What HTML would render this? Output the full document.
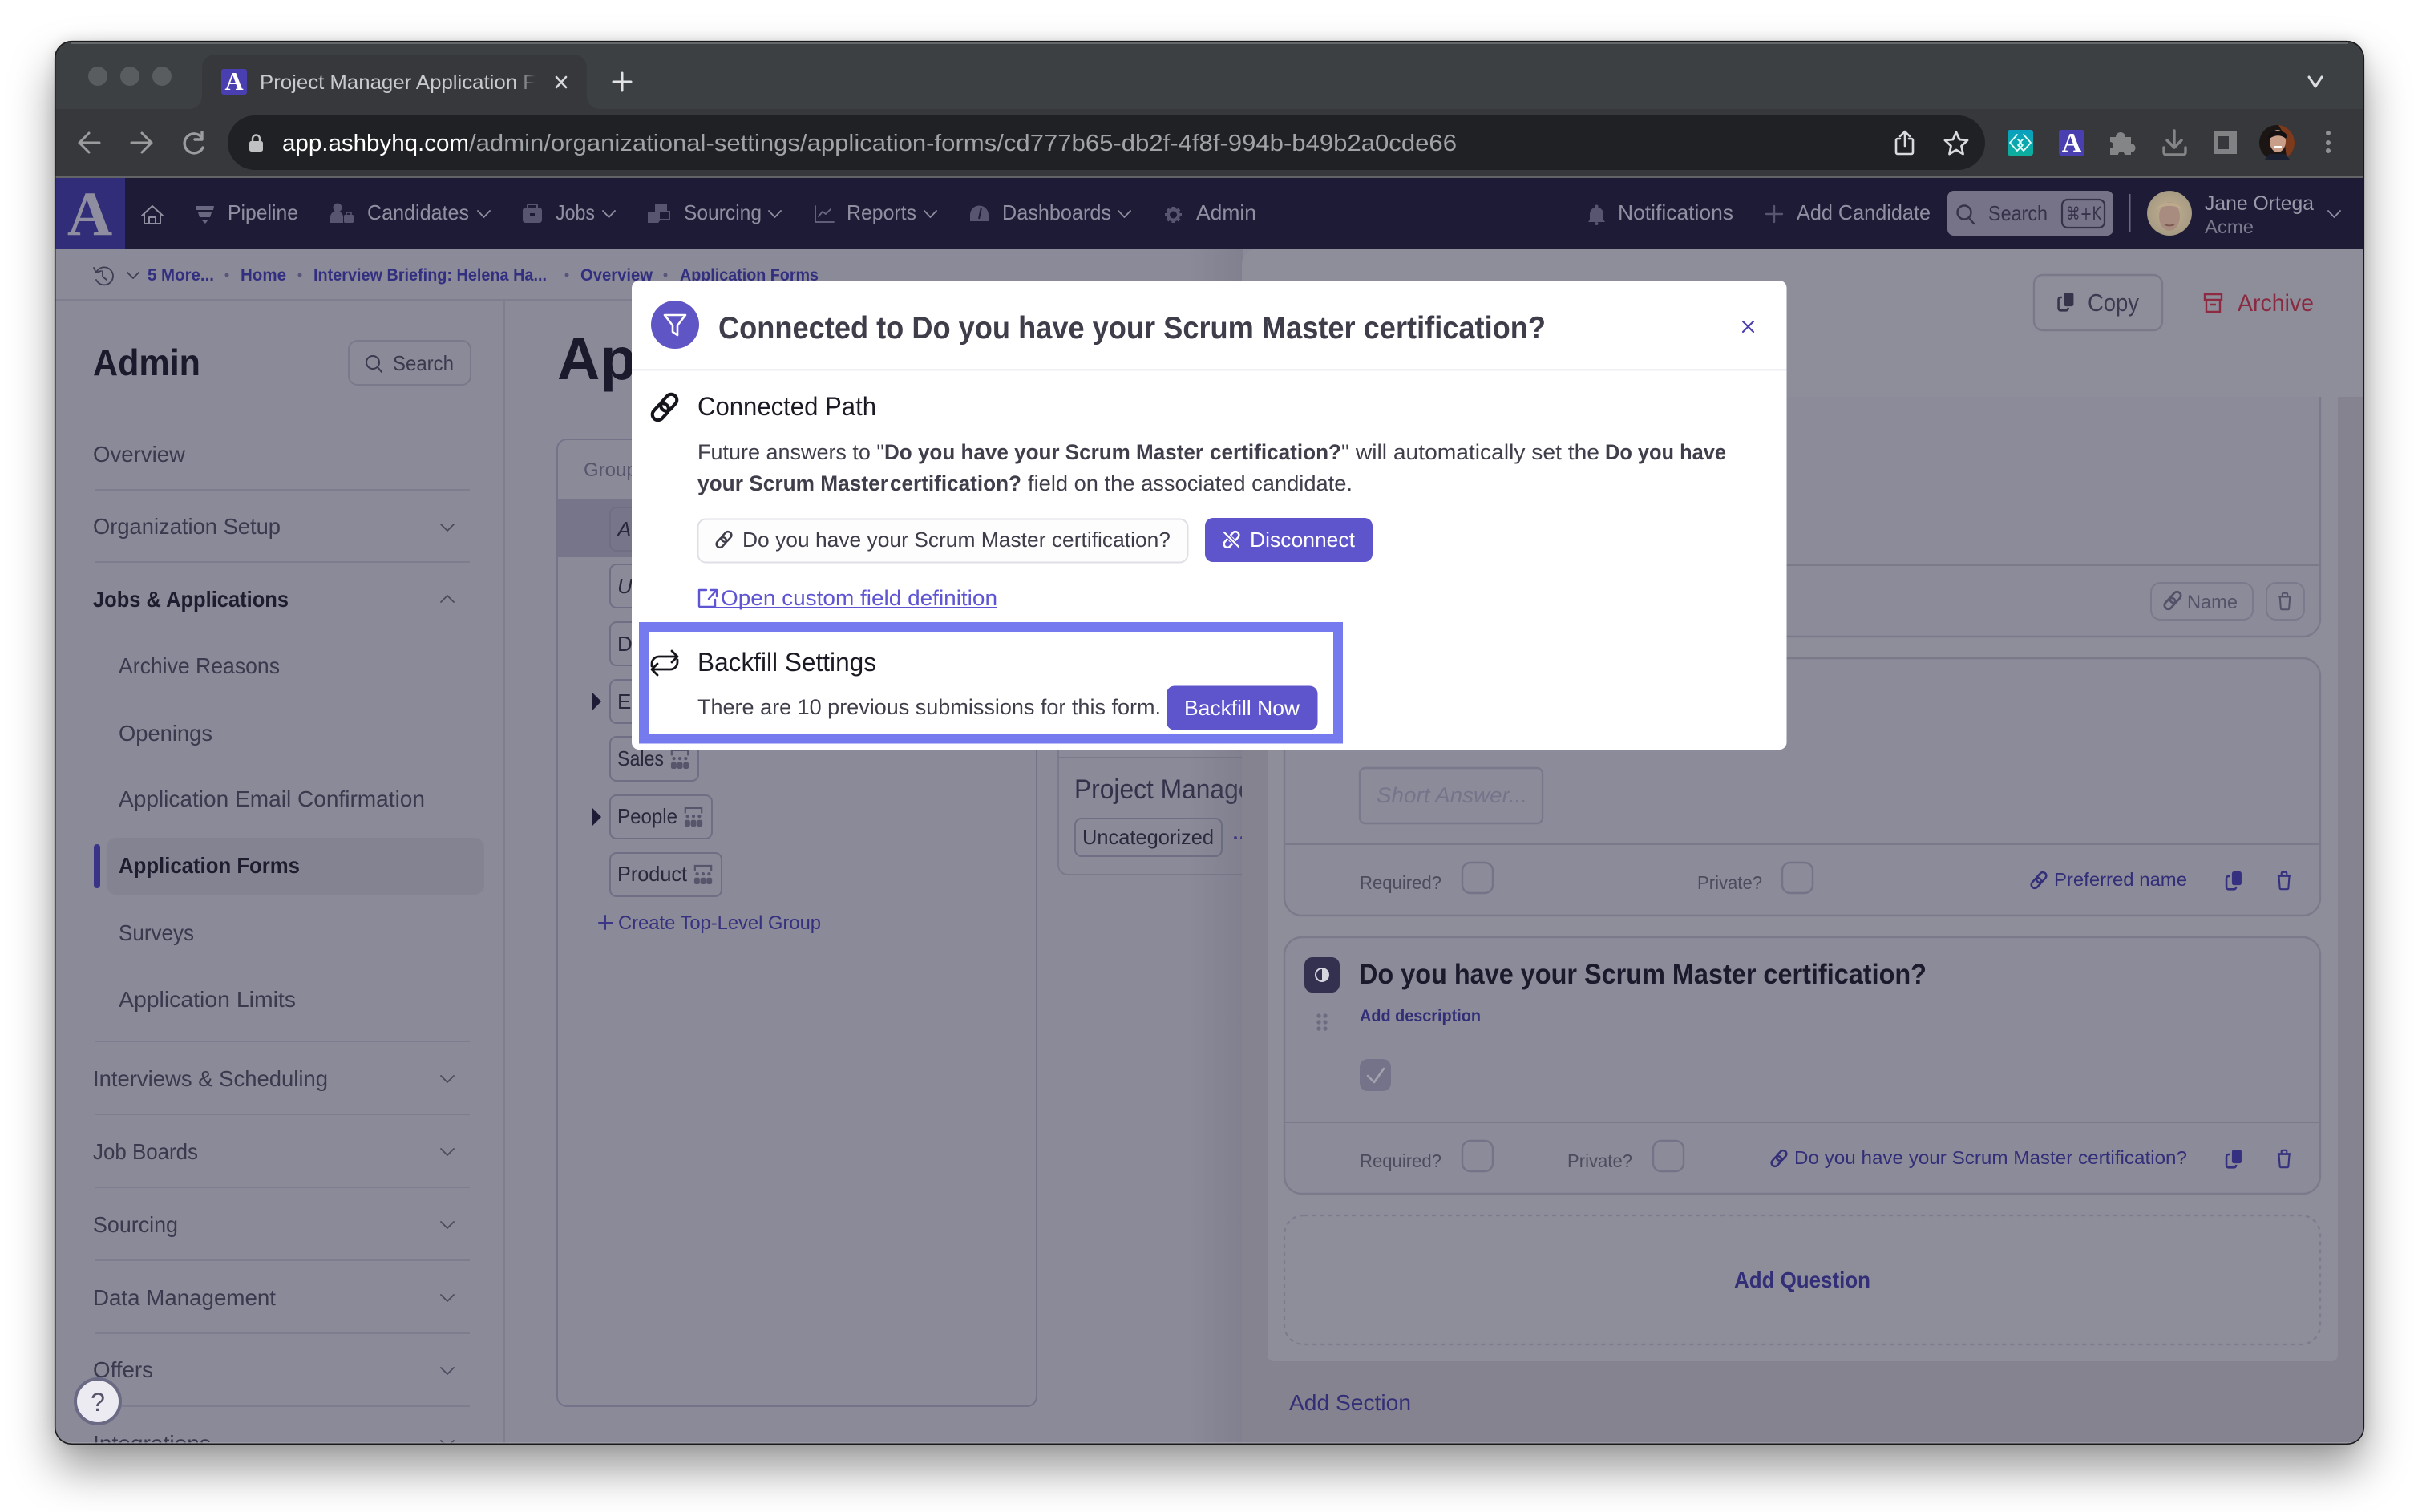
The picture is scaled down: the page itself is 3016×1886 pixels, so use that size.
<!DOCTYPE html>
<html><head><meta charset="utf-8"><style>
html,body{margin:0;padding:0;background:#fff;width:3016px;height:1886px;overflow:hidden}
#sh{position:absolute;left:68px;top:51px;width:2881px;height:1751px;border-radius:22px;box-shadow:0 30px 56px rgba(0,0,0,.4),0 0 16px rgba(0,0,0,.12)}
svg{position:absolute;left:0;top:0}
text{font-family:"Liberation Sans",sans-serif;white-space:pre}
.b{font-weight:700}
.n{fill:#908fa1;font-size:26px}
.s{fill:#3a394e;font-size:28px;transform:translate(-1px,-1px)}
.bc{fill:#332f80;font-size:21px;font-weight:700}
.p{fill:#3f3e4a;font-size:27px;transform:translateX(-1px)}
.l{fill:#332e78;font-size:23px}
.g{fill:#4d4c5e;font-size:23px}
.ic{fill:none;stroke-linecap:round;stroke-linejoin:round}
</style></head><body>
<div id="sh"></div>
<svg width="3016" height="1886" viewBox="0 0 3016 1886" xmlns="http://www.w3.org/2000/svg">
<defs>
<clipPath id="win"><rect x="68" y="51" width="2881" height="1751" rx="22"/></clipPath>
<linearGradient id="tabf" x1="0" x2="1"><stop offset=".93" stop-color="#c9cacc"/><stop offset="1" stop-color="#c9cacc" stop-opacity="0"/></linearGradient>
<linearGradient id="teal" x1="0" x2="0" y1="0" y2="1"><stop offset="0" stop-color="#0a9fc0"/><stop offset="1" stop-color="#0cae9c"/></linearGradient>
<linearGradient id="psh" x1="0" x2="1"><stop offset="0" stop-color="#5e5d70" stop-opacity="0"/><stop offset="1" stop-color="#5e5d70" stop-opacity=".22"/></linearGradient>
<radialGradient id="hair" cx=".5" cy=".5" r=".6"><stop offset="0" stop-color="#c2b090"/><stop offset=".8" stop-color="#a89c84"/><stop offset="1" stop-color="#67675a"/></radialGradient>
<symbol id="chain" viewBox="-14 -14 28 28" overflow="visible"><g transform="rotate(42)" fill="none" stroke="currentColor" stroke-width="3.2"><rect x="-5.500" y="-15" width="11" height="18" rx="5.500"/><rect x="-5.500" y="-3" width="11" height="18" rx="5.500"/></g></symbol>
<symbol id="copy" viewBox="0 0 24 28" overflow="visible"><rect x="9" y="0" width="14" height="20" rx="3" fill="currentColor"/><path d="M6 7H4a3 3 0 0 0-3 3v13a3 3 0 0 0 3 3h8a3 3 0 0 0 3-3v-1" fill="none" stroke="currentColor" stroke-width="3"/></symbol>
<symbol id="trash" viewBox="0 0 22 28" overflow="visible"><path d="M3 7h16l-1.500 19a1.500 1.500 0 0 1-1.500 1H6a1.500 1.500 0 0 1-1.500-1zM1 6.500h20M7 6V2.500A1.500 1.500 0 0 1 8.500 1h5A1.500 1.500 0 0 1 15 2.500V6" fill="none" stroke="currentColor" stroke-width="2.600"/></symbol>
<symbol id="org" viewBox="0 0 26 28" overflow="visible"><path d="M2 9V2h22v7" fill="none" stroke="currentColor" stroke-width="2.400"/><g fill="currentColor"><circle cx="5" cy="13" r="2.300"/><circle cx="13" cy="13" r="2.300"/><circle cx="21" cy="13" r="2.300"/><rect x="1" y="18" width="7.500" height="9" rx="2.500"/><rect x="9.300" y="18" width="7.500" height="9" rx="2.500"/><rect x="17.600" y="18" width="7.500" height="9" rx="2.500"/></g></symbol>
</defs>

<g clip-path="url(#win)">
<!-- chrome -->
<rect x="68" y="51" width="2881" height="85" fill="#3d4043"/>
<rect x="68" y="136" width="2881" height="84" fill="#37383b"/>
<rect x="68" y="220" width="2881" height="2" fill="#636466"/>
<circle cx="122" cy="95" r="12" fill="#595d5f"/><circle cx="162" cy="95" r="12" fill="#595d5f"/><circle cx="202" cy="95" r="12" fill="#595d5f"/>
<path d="M236 136a16 16 0 0 0 16-16V84a16 16 0 0 1 16-16h448a16 16 0 0 1 16 16v36a16 16 0 0 0 16 16z" fill="#37383b"/>
<rect x="276" y="86" width="32" height="32" rx="3" fill="#4a3fb0"/>
<text x="292" y="112" text-anchor="middle" style="font-family:'Liberation Serif',serif;font-weight:700;font-size:32px" fill="#fff">A</text>
<text x="324" y="111" font-size="25" fill="url(#tabf)" textLength="344" lengthAdjust="spacingAndGlyphs">Project Manager Application F</text>
<path d="M694 96l12 13M706 96l-12 13" stroke="#d8d9db" stroke-width="2.600" class="ic"/>
<path d="M776 91v22M765 102h22" stroke="#e2e3e4" stroke-width="3" class="ic"/>
<path d="M2880 96l8 12 8-12" stroke="#dcdddf" stroke-width="3" class="ic"/>
<rect x="284" y="144" width="2192" height="68" rx="34" fill="#202124"/>
<path d="M124 178H100M111 166l-12 12 12 12" stroke="#9a9c9e" stroke-width="3" class="ic"/>
<path d="M164 178h24M177 166l12 12-12 12" stroke="#9a9c9e" stroke-width="3" class="ic"/>
<path d="M252 172a12 12 0 1 0 1 12M252 165v9h-9" stroke="#9a9c9e" stroke-width="3.400" class="ic"/>
<rect x="311" y="176" width="17" height="13" rx="2.500" fill="#bfc1c3"/><path d="M315 177v-4a4.500 4.500 0 0 1 9 0v4" stroke="#bfc1c3" stroke-width="2.400" class="ic"/>
<text x="352" y="188" font-size="29" fill="#fff" textLength="233" lengthAdjust="spacingAndGlyphs">app.ashbyhq.com</text>
<text x="585" y="188" font-size="29" fill="#a1a3a6" textLength="1232" lengthAdjust="spacingAndGlyphs">/admin/organizational-settings/application-forms/cd777b65-db2f-4f8f-994b-b49b2a0cde66</text>
<path d="M2370 173h-3a2 2 0 0 0-2 2v15a2 2 0 0 0 2 2h17a2 2 0 0 0 2-2v-15a2 2 0 0 0-2-2h-3M2376 182v-17M2370 170l6-6 6 6" stroke="#d9dadc" stroke-width="2.600" class="ic"/>
<path d="M2440 165l4 9 10 1-7.500 7 2 10-8.500-5-8.500 5 2-10-7.500-7 10-1z" stroke="#d9dadc" stroke-width="2.800" class="ic"/>
<rect x="2504" y="162" width="32" height="32" rx="3" fill="url(#teal)"/>
<path d="M2516 168l-9 10 9 10 7-7-4-3 4-4M2524 168l9 10-9 10-7-7 4-3-4-4" stroke="#e8fbfb" stroke-width="1.800" class="ic"/>
<rect x="2568" y="162" width="32" height="32" rx="3" fill="#4a3fb0"/>
<text x="2584" y="189" text-anchor="middle" style="font-family:'Liberation Serif',serif;font-weight:700;font-size:34px" fill="#fff">A</text>
<path d="M2632 171h7a6 6 0 1 1 12 0h7v8a5.500 5.500 0 1 1 0 11v3h-8a4 4 0 1 0-8 0h-10v-8a4 4 0 1 0 0-8z" fill="#848587"/>
<path d="M2712 163v20M2703 175l9 9 9-9M2699 184v6a3 3 0 0 0 3 3h21a3 3 0 0 0 3-3v-6" stroke="#848587" stroke-width="3.400" class="ic"/>
<rect x="2762" y="164" width="28" height="28" fill="#818283"/><rect x="2767" y="170" width="13" height="16" fill="#37383b"/>
<ellipse cx="2840" cy="178" rx="22" ry="22" fill="#1b1614"/><path d="M2842 156a22 22 0 0 1 20 22c0 8-4 15-10 18l-4-30z" fill="#7d3a1c"/>
<ellipse cx="2841" cy="176" rx="10" ry="14" fill="#c99e88"/><path d="M2829 172c0-11 21-12 24-2l-2 3c-5-5-14-5-20 0z" fill="#141012"/><rect x="2836" y="182" width="10" height="2.500" fill="#fff"/><path d="M2824 200l7-8h19l7 8z" fill="#1a2032"/>
<circle cx="2904" cy="166" r="3" fill="#909193"/><circle cx="2904" cy="178" r="3" fill="#909193"/><circle cx="2904" cy="188" r="3" fill="#909193"/>

<!-- nav -->
<rect x="68" y="222" width="2881" height="88" fill="#1d1b36"/>
<rect x="68" y="222" width="88" height="88" fill="#322d78"/>
<text x="112" y="293" text-anchor="middle" style="font-family:'Liberation Serif',serif;font-weight:700;font-size:78px" fill="#8f8ea0">A</text>
<path d="M177 269l13-12 13 12M180 266v12a1 1 0 0 0 1 1h18a1 1 0 0 0 1-1v-12M186 279v-8h8v8" stroke="#8f8ea0" stroke-width="2" class="ic"/>
<path d="M244 257h23l-1 5h-21zM247 265h17l-2 6h-13zM251 274h9l-4 5z" fill="#6a6880"/>
<text class="n" x="284" y="274" textLength="88" lengthAdjust="spacingAndGlyphs">Pipeline</text>
<circle cx="421" cy="259" r="5.500" fill="#57556f"/><path d="M412 278v-7a8 8 0 0 1 16 0v7z" fill="#57556f"/><rect x="429" y="268" width="12" height="10" rx="1.500" fill="#57556f"/><rect x="432" y="265" width="6" height="4" fill="none" stroke="#57556f" stroke-width="1.600"/>
<text class="n" x="458" y="274" textLength="127" lengthAdjust="spacingAndGlyphs">Candidates</text>
<path d="M596 263l7.500 8 7.500-8" stroke="#8f8ea0" stroke-width="1.800" class="ic"/>
<rect x="652" y="259" width="24" height="19" rx="3.500" fill="#57556f"/><rect x="658" y="255" width="12" height="5" rx="1.500" fill="none" stroke="#57556f" stroke-width="2"/><rect x="661" y="266" width="6" height="3" fill="#1d1b36"/>
<text class="n" x="693" y="274" textLength="49" lengthAdjust="spacingAndGlyphs">Jobs</text>
<path d="M752 263l7.500 8 7.500-8" stroke="#8f8ea0" stroke-width="1.800" class="ic"/>
<path d="M817 254h15v10h-8v10l-3 4h-13v-13h9z" fill="#57556f"/><rect x="822" y="264" width="13" height="10" fill="#1d1b36" stroke="#57556f" stroke-width="2"/>
<text class="n" x="853" y="274" textLength="97" lengthAdjust="spacingAndGlyphs">Sourcing</text>
<path d="M959 263l7.500 8 7.500-8" stroke="#8f8ea0" stroke-width="1.800" class="ic"/>
<path d="M1017 257v20h23M1021 270l5-6 4 3 6-6" stroke="#6a6880" stroke-width="1.800" class="ic"/>
<text class="n" x="1056" y="274" textLength="87" lengthAdjust="spacingAndGlyphs">Reports</text>
<path d="M1153 263l7.500 8 7.500-8" stroke="#8f8ea0" stroke-width="1.800" class="ic"/>
<path d="M1210 276v-8a11.500 11.500 0 0 1 23 0v8z" fill="#57556f"/>
<path d="M1224 259l-3 14" stroke="#1d1b36" stroke-width="2"/>
<text class="n" x="1250" y="274" textLength="136" lengthAdjust="spacingAndGlyphs">Dashboards</text>
<path d="M1395 263l7.500 8 7.500-8" stroke="#8f8ea0" stroke-width="1.800" class="ic"/>
<path d="M1463.500 258v20M1453 268h21M1456 261l15 14M1471 261l-15 14" stroke="#57556f" stroke-width="4"/><circle cx="1463.500" cy="268" r="6.500" fill="#1d1b36" stroke="#57556f" stroke-width="4"/>
<text class="n" x="1492" y="274" textLength="75" lengthAdjust="spacingAndGlyphs">Admin</text>
<path d="M1983 274v-7a8.500 8.500 0 0 1 17 0v7l2 3h-21z" fill="#57556f"/><circle cx="1991.500" cy="257.500" r="2" fill="#57556f"/><circle cx="1991.500" cy="279" r="2" fill="#57556f"/>
<text class="n" x="2018" y="274" textLength="144" lengthAdjust="spacingAndGlyphs">Notifications</text>
<path d="M2213 257v20M2203 267h20" stroke="#57556f" stroke-width="2.400" class="ic"/>
<text class="n" x="2241" y="274" textLength="167" lengthAdjust="spacingAndGlyphs">Add Candidate</text>
<rect x="2429" y="238" width="207" height="56" rx="8" fill="#767388"/>
<circle cx="2450" cy="265" r="8.500" fill="none" stroke="#34334a" stroke-width="2.400"/><path d="M2456 272l6 7" stroke="#34334a" stroke-width="2.400" class="ic"/>
<text x="2480" y="275" font-size="26" fill="#34334a" textLength="74" lengthAdjust="spacingAndGlyphs">Search</text>
<rect x="2572" y="249" width="53" height="35" rx="7" fill="none" stroke="#34334a" stroke-width="2.200"/>
<text x="2577" y="274" font-size="22" fill="#34334a" style="font-family:'DejaVu Sans',sans-serif" textLength="44" lengthAdjust="spacingAndGlyphs">⌘+K</text>
<rect x="2655.500" y="242" width="2" height="48" fill="#6c6a80"/>
<ellipse cx="2706" cy="266" rx="28" ry="28" fill="url(#hair)"/><ellipse cx="2706" cy="270" rx="13" ry="18" fill="#a98c80"/><path d="M2690 262c3-12 27-13 32 0-9-7-23-7-32 0z" fill="#bda98c"/><path d="M2700 280q6 3 12 0" stroke="#7c5a52" stroke-width="2" fill="none"/>
<text x="2750" y="262" font-size="25" fill="#9a99a9" textLength="136" lengthAdjust="spacingAndGlyphs">Jane Ortega</text>
<text x="2750" y="291" font-size="23" fill="#7b7a8d" textLength="61" lengthAdjust="spacingAndGlyphs">Acme</text>
<path d="M2904 263l7.500 8 7.500-8" stroke="#8f8ea0" stroke-width="1.800" class="ic"/>

<!-- body left -->
<rect x="68" y="310" width="2881" height="1492" fill="#8b8a98"/>
<rect x="68" y="373" width="1490" height="2" fill="#7f7e8f"/>
<rect x="628" y="374" width="2" height="1428" fill="#7f7e8f"/>
<path d="M121 338a11 11 0 1 1-1 11M117 334l3 6 6-2M128 338v7l5 4" stroke="#3e3d52" stroke-width="1.800" class="ic"/>
<path d="M159 340l7 7 7-7" stroke="#3e3d52" stroke-width="1.800" class="ic"/>
<text class="bc" x="184" y="350" textLength="83" lengthAdjust="spacingAndGlyphs">5 More...</text><circle cx="283" cy="343" r="2.500" fill="#56557a"/>
<text class="bc" x="300" y="350" textLength="57" lengthAdjust="spacingAndGlyphs">Home</text><circle cx="374" cy="343" r="2.500" fill="#56557a"/>
<text class="bc" x="391" y="350" textLength="291" lengthAdjust="spacingAndGlyphs">Interview Briefing: Helena Ha...</text><circle cx="707" cy="343" r="2.500" fill="#56557a"/>
<text class="bc" x="724" y="350" textLength="90" lengthAdjust="spacingAndGlyphs">Overview</text><circle cx="830" cy="343" r="2.500" fill="#56557a"/>
<text class="bc" x="848" y="350" textLength="173" lengthAdjust="spacingAndGlyphs">Application Forms</text>

<text x="116" y="468" font-size="46" class="b" fill="#1b1a2c" textLength="134" lengthAdjust="spacingAndGlyphs">Admin</text>
<rect x="435" y="425" width="152" height="55" rx="11" fill="none" stroke="#7a798c" stroke-width="2"/>
<circle cx="465" cy="452" r="8" fill="none" stroke="#3a394e" stroke-width="2"/><path d="M471 458l5 6" stroke="#3a394e" stroke-width="2" class="ic"/>
<text x="490" y="462" font-size="26" fill="#3a394e" textLength="76" lengthAdjust="spacingAndGlyphs">Search</text>
<text class="s" x="117" y="577" textLength="115" lengthAdjust="spacingAndGlyphs">Overview</text>
<g fill="#7e7d8f"><rect x="118" y="610" width="468" height="2"/><rect x="118" y="700" width="468" height="2"/><rect x="118" y="1298" width="468" height="2"/><rect x="118" y="1389" width="468" height="2"/><rect x="118" y="1480" width="468" height="2"/><rect x="118" y="1571" width="468" height="2"/><rect x="118" y="1662" width="468" height="2"/><rect x="118" y="1753" width="468" height="2"/></g>
<text class="s" x="117" y="667" textLength="234" lengthAdjust="spacingAndGlyphs">Organization Setup</text>
<text class="s b" x="117" y="758" style="fill:#1e1d30" textLength="244" lengthAdjust="spacingAndGlyphs">Jobs &amp; Applications</text>
<text class="s" x="149" y="841" textLength="201" lengthAdjust="spacingAndGlyphs">Archive Reasons</text>
<text class="s" x="149" y="925" textLength="117" lengthAdjust="spacingAndGlyphs">Openings</text>
<text class="s" x="149" y="1007" textLength="382" lengthAdjust="spacingAndGlyphs">Application Email Confirmation</text>
<rect x="133" y="1045" width="471" height="71" rx="12" fill="#848391"/>
<rect x="117" y="1053" width="8" height="55" rx="4" fill="#393488"/>
<text class="s b" x="149" y="1090" style="fill:#1e1d30" textLength="226" lengthAdjust="spacingAndGlyphs">Application Forms</text>
<text class="s" x="149" y="1174" textLength="94" lengthAdjust="spacingAndGlyphs">Surveys</text>
<text class="s" x="149" y="1257" textLength="221" lengthAdjust="spacingAndGlyphs">Application Limits</text>
<text class="s" x="117" y="1356" textLength="293" lengthAdjust="spacingAndGlyphs">Interviews &amp; Scheduling</text>
<text class="s" x="117" y="1447" textLength="131" lengthAdjust="spacingAndGlyphs">Job Boards</text>
<text class="s" x="117" y="1538" textLength="106" lengthAdjust="spacingAndGlyphs">Sourcing</text>
<text class="s" x="117" y="1629" textLength="228" lengthAdjust="spacingAndGlyphs">Data Management</text>
<text class="s" x="117" y="1719" textLength="75" lengthAdjust="spacingAndGlyphs">Offers</text>
<text class="s" x="117" y="1811" textLength="147" lengthAdjust="spacingAndGlyphs">Integrations</text>
<g stroke="#4c4b60" stroke-width="1.800" class="ic">
<path d="M550 654l8 8 8-8"/><path d="M550 751l8-8 8 8"/><path d="M550 1342l8 8 8-8"/><path d="M550 1433l8 8 8-8"/><path d="M550 1524l8 8 8-8"/><path d="M550 1615l8 8 8-8"/><path d="M550 1706l8 8 8-8"/><path d="M550 1797l8 8 8-8"/>
</g>
<circle cx="122" cy="1748" r="28" fill="#ebebf1" stroke="#6b6a84" stroke-width="4"/>
<text x="122" y="1760" font-size="32" text-anchor="middle" fill="#55546a">?</text>

<!-- main -->
<text x="695" y="473" font-size="74" class="b" fill="#1b1a2c">Ap</text>
<rect x="695" y="548" width="598" height="1206" rx="12" fill="none" stroke="#74738a" stroke-width="2"/>
<text x="728" y="594" font-size="24" fill="#56556b">Group</text>
<rect x="696" y="623" width="596" height="72" fill="#777589"/>
<g fill="none" stroke="#6f6e84" stroke-width="2">
<rect x="761" y="633" width="120" height="54" rx="8"/><rect x="761" y="704" width="120" height="54" rx="8"/><rect x="761" y="776" width="120" height="54" rx="8"/><rect x="761" y="848" width="120" height="54" rx="8"/><rect x="761" y="919" width="110" height="55" rx="8"/><rect x="761" y="992" width="127" height="54" rx="8"/><rect x="761" y="1064" width="139" height="54" rx="8"/>
</g>
<g font-size="26" fill="#29283c">
<text x="770" y="669" font-style="italic">A</text><text x="770" y="740" font-style="italic">U</text><text x="770" y="812">D</text><text x="770" y="884">En</text>
<text x="770" y="955" textLength="58" lengthAdjust="spacingAndGlyphs">Sales</text><text x="770" y="1027" textLength="75" lengthAdjust="spacingAndGlyphs">People</text><text x="770" y="1099" textLength="87" lengthAdjust="spacingAndGlyphs">Product</text>
</g>
<path d="M739 864l11 11-11 11zM739 1008l11 11-11 11z" fill="#1d1b36"/>
<g color="#56556c"><use href="#org" x="836" y="934" width="24" height="26"/><use href="#org" x="853" y="1006" width="24" height="26"/><use href="#org" x="865" y="1078" width="24" height="26"/></g>
<path d="M755 1142v17M747 1151h17" stroke="#3a3586" stroke-width="2" class="ic"/>
<text x="771" y="1159" font-size="24" fill="#35307f" textLength="253" lengthAdjust="spacingAndGlyphs">Create Top-Level Group</text>
<rect x="1320" y="880" width="300" height="211" rx="12" fill="none" stroke="#7b7a8c" stroke-width="2"/>
<rect x="1320" y="944" width="300" height="2" fill="#7b7a8c"/>
<text x="1340" y="996" font-size="34" fill="#33324a" textLength="233" lengthAdjust="spacingAndGlyphs">Project Manager</text>
<rect x="1341" y="1021" width="183" height="47" rx="8" fill="none" stroke="#6f6e84" stroke-width="2"/>
<text x="1350" y="1053" font-size="26" fill="#29283c" textLength="164" lengthAdjust="spacingAndGlyphs">Uncategorized</text>
<circle cx="1541" cy="1045" r="2" fill="#3a3586"/><circle cx="1549" cy="1045" r="2" fill="#3a3586"/>

<!-- right panel -->
<rect x="1480" y="310" width="70" height="1492" fill="url(#psh)"/>
<path d="M1549 1802V330a20 20 0 0 1 20-20H2949V1802z" fill="#84838f"/>
<path d="M1549 495V330a20 20 0 0 1 20-20H2949V495z" fill="#8e8e9b"/>
<path d="M1581 495H2916V1690a8 8 0 0 1-8 8H1589a8 8 0 0 1-8-8z" fill="#8e8e9b"/>

<rect x="2537" y="343" width="160" height="69" rx="11" fill="none" stroke="#7a7989" stroke-width="2.400"/>
<use href="#copy" x="2565" y="365" width="24" height="24" style="color:#35344a"/>
<text x="2604" y="388" font-size="31" fill="#3c3a50" textLength="64" lengthAdjust="spacingAndGlyphs">Copy</text>
<path d="M2750 367h21v7h-21zM2752 374v15h17v-15M2757 380h7" fill="none" stroke="#8e2a42" stroke-width="2.400"/>
<text x="2791" y="388" font-size="30" fill="#8a2a40" textLength="95" lengthAdjust="spacingAndGlyphs">Archive</text>

<!-- cards -->
<path d="M1602 495V772a22 22 0 0 0 22 22H2872a22 22 0 0 0 22-22V495" fill="#8c8b99" stroke="#7b7a8b" stroke-width="2.400"/>
<rect x="1603" y="704" width="1291" height="2" fill="#7b7a8b"/>
<rect x="2683" y="727" width="127" height="46" rx="12" fill="none" stroke="#7b7a8d" stroke-width="2"/>
<use href="#chain" x="2698" y="737" width="24" height="24" style="color:#535268"/>
<text x="2728" y="759" font-size="24" fill="#535268" textLength="63" lengthAdjust="spacingAndGlyphs">Name</text>
<rect x="2827" y="727" width="47" height="46" rx="12" fill="none" stroke="#7b7a8d" stroke-width="2"/>
<use href="#trash" x="2841" y="739" width="18" height="22" style="color:#535268"/>

<rect x="1602" y="821" width="1292" height="321" rx="22" fill="#8c8b99" stroke="#7b7a8b" stroke-width="2.400"/>
<rect x="1603" y="1052" width="1291" height="2" fill="#7b7a8b"/>
<rect x="1696" y="958" width="228" height="69" rx="7" fill="none" stroke="#7a798c" stroke-width="2.400"/>
<text x="1717" y="1001" font-size="27" font-style="italic" fill="#75748a" textLength="188" lengthAdjust="spacingAndGlyphs">Short Answer...</text>
<rect x="1824" y="1076" width="38" height="38" rx="10" fill="none" stroke="#747387" stroke-width="2.400"/>
<rect x="2223" y="1076" width="38" height="38" rx="10" fill="none" stroke="#747387" stroke-width="2.400"/>
<text class="g" x="1696" y="1109" textLength="102" lengthAdjust="spacingAndGlyphs">Required?</text>
<text class="g" x="2117" y="1109" textLength="81" lengthAdjust="spacingAndGlyphs">Private?</text>
<use href="#chain" x="2532" y="1087" width="22" height="22" style="color:#332e78"/>
<text class="l" x="2562" y="1105" textLength="166" lengthAdjust="spacingAndGlyphs">Preferred name</text>
<use href="#copy" x="2776" y="1087" width="21" height="24" style="color:#35307f"/>
<use href="#trash" x="2840" y="1087" width="18" height="23" style="color:#35307f"/>

<rect x="1602" y="1169" width="1292" height="320" rx="22" fill="#8c8b99" stroke="#7b7a8b" stroke-width="2.400"/>
<rect x="1603" y="1399" width="1291" height="2" fill="#7b7a8b"/>
<rect x="1627" y="1194" width="44" height="44" rx="10" fill="#333050"/>
<circle cx="1649" cy="1216" r="8" fill="none" stroke="#d5d5dd" stroke-width="2"/><path d="M1649 1208a8 8 0 0 1 0 16z" fill="#d5d5dd"/>
<text x="1695" y="1227" font-size="35" class="b" fill="#1b1a2c" textLength="708" lengthAdjust="spacingAndGlyphs">Do you have your Scrum Master certification?</text>
<text x="1696" y="1274" font-size="21" class="b" fill="#332e78" textLength="151" lengthAdjust="spacingAndGlyphs">Add description</text>
<g fill="#6c6b80"><circle cx="1645" cy="1267" r="2.600"/><circle cx="1653" cy="1267" r="2.600"/><circle cx="1645" cy="1275" r="2.600"/><circle cx="1653" cy="1275" r="2.600"/><circle cx="1645" cy="1283" r="2.600"/><circle cx="1653" cy="1283" r="2.600"/></g>
<rect x="1696" y="1321" width="39" height="40" rx="10" fill="#74738a"/>
<path d="M1706 1342l8 8 12-17" stroke="#a3a3b0" stroke-width="2.600" class="ic"/>
<rect x="1824" y="1423" width="38" height="38" rx="10" fill="none" stroke="#747387" stroke-width="2.400"/>
<rect x="2062" y="1423" width="38" height="38" rx="10" fill="none" stroke="#747387" stroke-width="2.400"/>
<text class="g" x="1696" y="1456" textLength="102" lengthAdjust="spacingAndGlyphs">Required?</text>
<text class="g" x="1955" y="1456" textLength="81" lengthAdjust="spacingAndGlyphs">Private?</text>
<use href="#chain" x="2208" y="1434" width="22" height="22" style="color:#332e78"/>
<text class="l" x="2238" y="1452" textLength="490" lengthAdjust="spacingAndGlyphs">Do you have your Scrum Master certification?</text>
<use href="#copy" x="2776" y="1434" width="21" height="24" style="color:#35307f"/>
<use href="#trash" x="2840" y="1434" width="18" height="23" style="color:#35307f"/>

<rect x="1602" y="1516" width="1292" height="161" rx="24" fill="none" stroke="#7d7c8e" stroke-width="2.400" stroke-dasharray="5 5"/>
<text x="2163" y="1606" font-size="28" class="b" fill="#332e78" textLength="170" lengthAdjust="spacingAndGlyphs">Add Question</text>
<text x="1608" y="1759" font-size="28" fill="#332e78" textLength="152" lengthAdjust="spacingAndGlyphs">Add Section</text>

<rect x="68" y="1799" width="2881" height="3" fill="#a2a1ad" opacity=".7"/>
</g>
<rect x="68.700" y="51.700" width="2879.600" height="1749.600" rx="21" fill="none" stroke="#1a1a1c" stroke-width="1.600"/>
<rect x="88" y="53" width="2841" height="2" fill="#66696b"/>

<!-- modal -->
<rect x="788" y="350" width="1440.500" height="585" rx="9" fill="#fff"/>
<rect x="788" y="460" width="1440.500" height="2.400" fill="#eeeef4"/>
<circle cx="842" cy="405" r="30" fill="#6055c4"/>
<path d="M829 393h26l-10 13v12l-6-4v-8z" stroke="#fff" stroke-width="2.600" class="ic"/>
<text x="896" y="422" font-size="39" class="b" fill="#3e3d4a" textLength="1032" lengthAdjust="spacingAndGlyphs">Connected to Do you have your Scrum Master certification?</text>
<path d="M2174 401l13 13M2187 401l-13 13" stroke="#4a3fb0" stroke-width="2.200" class="ic"/>

<use href="#chain" x="811" y="490" width="36" height="36" style="color:#15151c"/>
<text x="870" y="518" font-size="32" fill="#1a1a24" textLength="223" lengthAdjust="spacingAndGlyphs">Connected Path</text>
<text class="p" x="871" y="573" textLength="233" lengthAdjust="spacingAndGlyphs">Future answers to "</text>
<text class="p b" x="1104" y="573" textLength="398" lengthAdjust="spacingAndGlyphs">Do you have your Scrum Master</text>
<text class="p b" x="1510" y="573" textLength="164" lengthAdjust="spacingAndGlyphs">certification?</text>
<text class="p" x="1674" y="573" textLength="322" lengthAdjust="spacingAndGlyphs">" will automatically set the</text>
<text class="p b" x="2003" y="573" textLength="151" lengthAdjust="spacingAndGlyphs">Do you have</text>
<text class="p b" x="871" y="612" textLength="238" lengthAdjust="spacingAndGlyphs">your Scrum Master</text>
<text class="p b" x="1111" y="612" textLength="164" lengthAdjust="spacingAndGlyphs">certification?</text>
<text class="p" x="1283" y="612" textLength="405" lengthAdjust="spacingAndGlyphs">field on the associated candidate.</text>
<rect x="870.500" y="647.500" width="611" height="54" rx="10" fill="#fdfdfe" stroke="#dfdfe6" stroke-width="2"/>
<use href="#chain" x="892" y="662" width="22" height="22" style="color:#3e3d4a"/>
<text x="926" y="682" font-size="26" fill="#3e3d4a" textLength="534" lengthAdjust="spacingAndGlyphs">Do you have your Scrum Master certification?</text>
<rect x="1503" y="646" width="209" height="55" rx="10" fill="#5e54cc"/>
<use href="#chain" x="1525" y="662" width="22" height="22" style="color:#fff"/>
<path d="M1527 664l18 18" stroke="#5e54cc" stroke-width="5"/><path d="M1527 664l18 18" stroke="#fff" stroke-width="2.200" class="ic"/>
<text x="1559" y="682" font-size="26" fill="#fff" textLength="131" lengthAdjust="spacingAndGlyphs">Disconnect</text>
<path d="M881 736h-9v20a1 1 0 0 0 1 1h19v-9M884 747l9-10M886 736h8v8" stroke="#5f55d2" stroke-width="2.400" class="ic"/>
<text x="899" y="755" font-size="27" fill="#5f55d2" textLength="345" lengthAdjust="spacingAndGlyphs">Open custom field definition</text>
<rect x="893" y="757" width="351" height="2" fill="#5f55d2"/>
<rect x="803" y="782" width="866" height="139.500" fill="none" stroke="#757bee" stroke-width="12"/>
<path d="M813 831v-3a9 9 0 0 1 9-9h22M838 812l7 7-7 7M845 823v3a9 9 0 0 1-9 9h-22M820 828l-7 7 7 7" stroke="#15151c" stroke-width="2.800" class="ic"/>
<text x="870" y="837" font-size="32" fill="#1a1a24" textLength="223" lengthAdjust="spacingAndGlyphs">Backfill Settings</text>
<text class="p" x="871" y="891" textLength="578" lengthAdjust="spacingAndGlyphs">There are 10 previous submissions for this form.</text>
<rect x="1455" y="855.500" width="188.500" height="55" rx="10" fill="#5e54cc"/>
<text x="1477" y="892" font-size="26" fill="#fff" textLength="144" lengthAdjust="spacingAndGlyphs">Backfill Now</text>
</svg>
</body></html>
